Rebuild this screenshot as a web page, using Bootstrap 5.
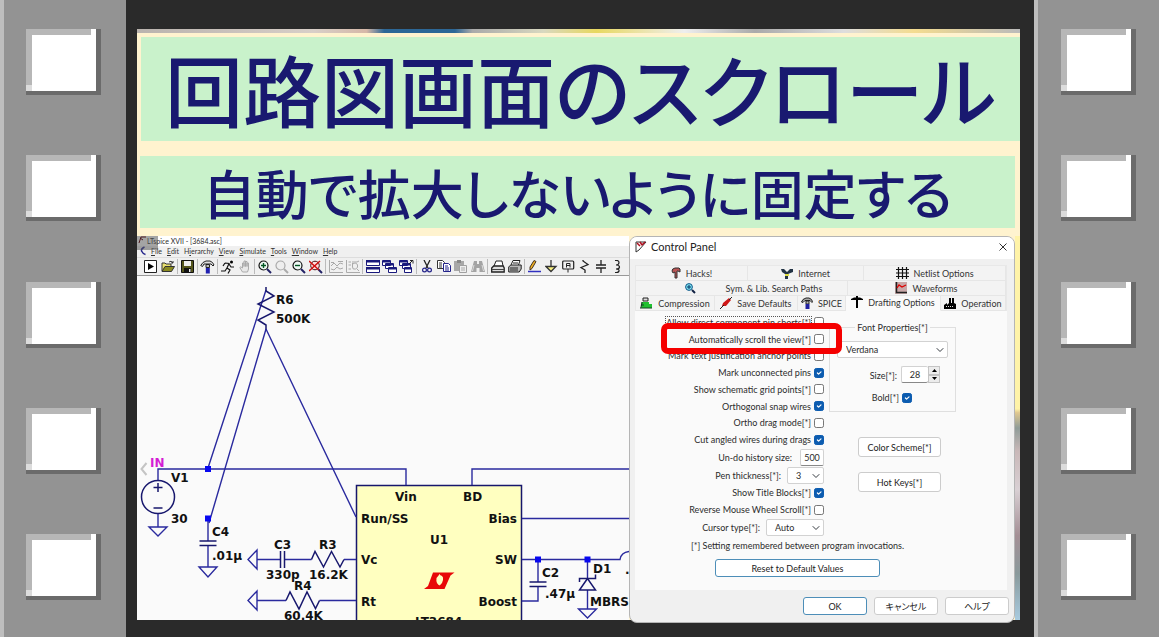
<!DOCTYPE html>
<html lang="ja">
<head>
<meta charset="utf-8">
<meta name="viewport" content="width=device-width, initial-scale=1">
<title>回路図画面のスクロール</title>
<link href="https://cdn.jsdelivr.net/npm/bootstrap@5.3.0/dist/css/bootstrap.min.css" rel="stylesheet">
<style>
body{background:#2a2a2a;font-family:Lato,"Noto Sans CJK JP",sans-serif;font-size:9px;line-height:11px;color:#2b2b2b}
/* film strip */
.rail{flex:0 0 126px;background:#939393;border-left:4px solid #bebebe;padding:29px 25px 37px 22px}
.rail-end{flex-basis:125px;padding:29px 23px 37px 23px}
.hole{width:75px;height:66px;border:solid #6b6b6b;border-width:0 5px 4px 0;background:linear-gradient(#b7b7b7,#b7b7b7) 0 0/65px 6px no-repeat,linear-gradient(#b7b7b7,#b7b7b7) 0 0/6px 56px no-repeat,linear-gradient(#dcdcdc,#dcdcdc) 0 100%/6px 6px no-repeat #fff}
.stage-wrap{padding:29px 14px 17px 11px;min-width:0}
.stage{background:linear-gradient(90deg,#b9b3ae,#d8cfc8 20%,#d6b8a8 26%,#2d6796 28%,#2d6796 36%,#aaa 38%,#d8d8c0 46%,#e8d860 52%,#eee 62%,#aaa 70%,#ddd 80%,#f4dc90 88%,#bbb) 0 0/100% 4px no-repeat #fff3cf}
.headline,.subline{background:#c9f2cb;color:#191970;font-family:"Noto Sans CJK JP",sans-serif;font-feature-settings:"palt";font-weight:500;white-space:nowrap}
.headline{font-size:78px;line-height:102px;padding-bottom:2px;margin:8px 0 15px 4px}
.subline{font-size:53px;line-height:72px;margin:0 5px 8px 3px}
/* schematic window */
.schem{min-width:0}
.spice-title{background:#fff;font-size:7px;line-height:10px;padding-left:10px}
.spice-menu{background:#f0f0f0;font-size:7px;line-height:11px;padding-left:3px;gap:5px}
.spice-menu a{color:#333;text-decoration:none}
.spice-tools{background:#f0f0f0;border-bottom:1px solid #999;border-top:1px solid #ddd;padding-left:5px;height:19px}
.tool{width:17px;height:17px;border:0;background:none;padding:0;display:flex;align-items:center;justify-content:center;flex:none}
.vline{width:3px;flex:none;background:linear-gradient(90deg,transparent 1px,#bbb 1px,#bbb 2px,transparent 2px);margin:1px 0}
.corner{left:0;top:0;width:21px;height:14px;background:rgba(90,90,90,.55)}
.sheet{background:#fafafa;min-height:0}
.sheet svg{font:bold 12px "DejaVu Sans",sans-serif}
/* dialog */
.photo{flex:0 0 5px;background:linear-gradient(#fff3a8 45%,#e0c890 46%,#8f9c98 50%,#c9b8b8 56%,#d9d0d4 66%,#a48f95 78%,#8a9a9c 88%,#a8cbe0)}
.panel{flex:0 0 386px;background:#f0f0f0;border:1px solid #b5b5b5;border-radius:8px;margin-bottom:-3px;overflow:hidden;z-index:2}
.panel-head{background:#fff;height:22px;padding:0 6px 3px 5px;font-size:11px;color:#222}
.tabs-area{margin:6px 7px 0 5px;border:1px solid #e8e8e8;border-bottom:0}
.tabrow{height:15px}
.tabbtn{border:0;border-right:1px solid #e6e6e6;border-bottom:1px solid #e6e6e6;background:#f3f3f3;padding:0;display:flex;align-items:center;justify-content:center;gap:5px;color:#333}
.tabbtn.now{background:#fafafa;border-bottom-color:#fafafa;padding-bottom:2px}
.page-area{background:#fafafa;margin:0 7px 0 5px;padding-top:3px;height:279px}
.form-body{width:325px}
.colmn-l{width:189px}
.ticks{height:134px;display:grid;grid-template-rows:repeat(8,1fr)}
.opt{display:flex;align-items:center;justify-content:flex-end;gap:3px;color:#2b2b2b;white-space:nowrap;position:relative}
.r19{height:19px}.r17{height:17px}
.form-check-input{width:10px;height:10px;margin:0;border:1px solid #777;border-radius:2px;flex:none}
.form-check-input:checked{background-color:#0c5cb0;border-color:#0c5cb0}
.opt.hot{z-index:3}
.opt.hot::before{content:"";position:absolute;inset:-8px -18px -6px 26px;border:6px solid #f50000;border-radius:7px;pointer-events:none}
.focus-dot{outline:1px dotted #555}
.form-select,.form-control{font-size:9px;line-height:11px;border:1px solid #d2d2d2;border-radius:2px;padding:0 4px;height:17px;min-height:0;color:#2b2b2b;background-color:#fff}
.form-select{background-size:8px;background-position:right 3px center;padding-left:8px;padding-right:10px}
.form-control{border-bottom-color:#888;text-align:center;padding:0}
.btn{font-size:9px;line-height:11px;padding:0;background:#fff;border:1px solid #ccc;border-radius:3px;color:#222;font-feature-settings:"palt"}
.btn.prime{border-color:#4d8eb8}
.colmn-r{width:127px;padding-top:8px}
.fontbox{border:1px solid #dfdfdf;height:90px;margin:0;padding:0 7px}
.fontbox legend{float:none;width:auto;font-size:9px;line-height:11px;margin:0 auto;padding:0 2px}
.size-row{padding:8px 8px 9px 0}
.spin{width:12px}
.spin button{border:1px solid #c4c4c4;background:#ececec;padding:0;flex:1;display:flex;align-items:center;justify-content:center}
.foot{gap:7px;padding:7px 5px 7px 0}
.foot .btn{width:64px;height:18px}
</style>
</head>
<body>
<div class="d-flex min-vh-100">
  <aside class="rail d-flex flex-column justify-content-between">
    <div class="hole"></div><div class="hole"></div><div class="hole"></div><div class="hole"></div><div class="hole"></div>
  </aside>
  <main class="stage-wrap flex-grow-1 d-flex flex-column">
    <div class="stage flex-grow-1 d-flex flex-column">
      <h1 class="headline text-center">回路図画面のスクロール</h1>
      <h2 class="subline text-center">自動で拡大しないように固定する</h2>
      <div class="d-flex flex-grow-1">
        <section class="schem flex-grow-1 d-flex flex-column position-relative overflow-hidden">
          <div class="spice-title">LTspice XVII - [3684.asc]</div>
          <nav class="spice-menu d-flex">
            <svg width="6" height="10" viewBox="0 0 6 10"><path d="M4.500 1Q1 2.500 1.500 5Q3 8 5.500 8.500" fill="none" stroke="#22228a" stroke-width="1.500"/></svg>
            <a href="#"><u>F</u>ile</a><a href="#"><u>E</u>dit</a><a href="#">H<u>i</u>erarchy</a><a href="#"><u>V</u>iew</a><a href="#"><u>S</u>imulate</a><a href="#"><u>T</u>ools</a><a href="#"><u>W</u>indow</a><a href="#"><u>H</u>elp</a>
          </nav>
          <div class="spice-tools d-flex">
            <button class="tool" aria-label="Run"><svg width="13" height="13" viewBox="0 0 13 13"><path d="M.5.5h12v12H.5z" fill="#fff" stroke="#222"/><path d="M4 3l6 3.500-6 3.500z" fill="#000"/></svg></button>
            <button class="tool" aria-label="Open"><svg width="14" height="13" viewBox="0 0 14 13"><path d="M1 11V3h3l1 1h5v2" fill="#e8e070" stroke="#333"/><path d="M1 11.500l3-5h9.500l-3 5z" fill="#8a8a20" stroke="#333"/><path d="M8 2q2-2 4 1M12 1v2h-2" fill="none" stroke="#333"/></svg></button>
            <span class="vline"></span>
            <button class="tool" aria-label="Save"><svg width="13" height="13" viewBox="0 0 13 13"><path d="M.5.5h12v12H.5z" fill="#55561d" stroke="#111"/><path d="M3 1h7v5H3z" fill="#eee"/><path d="M3 8h7v4H3z" fill="#111"/><path d="M8 9h1.500v3H8z" fill="#eee"/></svg></button>
            <span class="vline"></span>
            <button class="tool" aria-label="Control panel"><svg width="15" height="14" viewBox="0 0 15 14"><path d="M.7 5.500L3 2.500 6 1h4q3 1 4 4l-1 1-2-2H4L2.500 6.500z" fill="#ddd" stroke="#222"/><path d="M6 4.500h3.500v3H6z" fill="#bbb" stroke="#222"/><path d="M5.800 8h4v5.500h-4z" fill="#2020b0"/></svg></button>
            <span class="vline"></span>
            <button class="tool" aria-label="Halt"><svg width="14" height="14" viewBox="0 0 14 14"><circle cx="10.500" cy="2" r="1.500"/><path d="M4 3l4 .5L6 8l3 2-2 3.500M6 8l-2 3H0M8 4l2 3h3M4 3L2 6" fill="none" stroke="#111" stroke-width="1.200"/></svg></button>
            <button class="tool" aria-label="Pan"><svg width="12" height="13" viewBox="0 0 12 13"><path d="M3.500 12L.8 7.500l1-.7L3.500 8V3h1.500v3.500V1h1.500v5.500V1.500H8v5V3h1.500v6l-1 3z" fill="#e8e8e8" stroke="#aaa"/></svg></button>
            <span class="vline"></span>
            <button class="tool" aria-label="Zoom in"><svg width="14" height="14" viewBox="0 0 14 14"><circle cx="5.500" cy="5.500" r="4.500" fill="#eef8f4" stroke="#111" stroke-width="1.200"/><path d="M5.500 3v5M3 5.500h5" stroke="#052" stroke-width="1.400"/><path d="M9 9l4 4" stroke="#226" stroke-width="2"/></svg></button>
            <button class="tool" aria-label="Zoom area"><svg width="14" height="14" viewBox="0 0 14 14"><circle cx="5.500" cy="5.500" r="4.500" fill="#eee" stroke="#aaa" stroke-width="1.200"/><path d="M9 9l4 4" stroke="#aaa" stroke-width="2"/></svg></button>
            <button class="tool" aria-label="Zoom out"><svg width="14" height="14" viewBox="0 0 14 14"><circle cx="5.500" cy="5.500" r="4.500" fill="#eef8f4" stroke="#111" stroke-width="1.200"/><path d="M3 5.500h5" stroke="#052" stroke-width="1.400"/><path d="M9 9l4 4" stroke="#226" stroke-width="2"/></svg></button>
            <button class="tool" aria-label="Zoom fit"><svg width="14" height="14" viewBox="0 0 14 14"><circle cx="6" cy="5.500" r="4.300" fill="#fdd" stroke="#411" stroke-width="1"/><path d="M9 9l4 4" stroke="#226" stroke-width="2"/><path d="M0 1l10 9M11 1L0 11" stroke="#d01010" stroke-width="1.500"/></svg></button>
            <span class="vline"></span>
            <button class="tool" aria-label="Autorange"><svg width="14" height="13" viewBox="0 0 14 13" fill="none" stroke="#aaa"><path d="M.5 0v12.500H14M2 6l3-3 3 3 3-3 3 1M2 9l3 1 3-3 3 2 3-1M2 2.500h3M9 1.500h5"/></svg></button>
            <button class="tool" aria-label="Trace"><svg width="14" height="13" viewBox="0 0 14 13" fill="none" stroke="#aaa"><path d="M.5 0v12.500H14M2.500 2H5M2.500 5H5M2.500 9H5"/><path d="M6 2h5l2-1M6.500 4q4-2 5 1t-2 4-3-2V3M11 9l2 2"/></svg></button>
            <span class="vline"></span>
            <button class="tool" aria-label="Tile"><svg width="14" height="13" viewBox="0 0 14 13"><path d="M.5.5h13v5H.5zM.5 7.500h13v5H.5z" fill="#fff" stroke="#18187c"/><path d="M0 0h14v2.500H0zM0 7h14v2.500H0z" fill="#18187c"/></svg></button>
            <button class="tool" aria-label="Cascade"><svg width="15" height="13" viewBox="0 0 15 13"><g fill="#fff" stroke="#18187c"><path d="M.5.5h8v5h-8zM3.500 3.500h8v5h-8zM6.500 7.500h8v5h-8z"/><path d="M1 1.500h7M4 4.500h7M7 8.500h7" stroke-width="2"/></g></svg></button>
            <button class="tool" aria-label="Close all"><svg width="15" height="13" viewBox="0 0 15 13"><g fill="#fff" stroke="#18187c"><path d="M.5.5h8v5h-8zM3.500 3.500h8v5h-8zM5.500 7.500h7v5h-7z"/><path d="M1 1.500h7M4 4.500h7M6 8.500h6" stroke-width="2"/><path d="M10 4l4-4M11 .5h3v3" stroke="#222"/></g></svg></button>
            <span class="vline"></span>
            <button class="tool" aria-label="Cut"><svg width="10" height="13" viewBox="0 0 10 13" fill="none"><path d="M2 0l4 8M8 0L4 8" stroke="#222" stroke-width="1.300"/><circle cx="2.500" cy="10" r="1.900" stroke="#22228a" stroke-width="1.200"/><circle cx="7.500" cy="10" r="1.900" stroke="#22228a" stroke-width="1.200"/></svg></button>
            <button class="tool" aria-label="Copy"><svg width="14" height="13" viewBox="0 0 14 13" fill="#fff"><path d="M.5.5h5l2 2v6h-7z" stroke="#333"/><path d="M2 3h3M2 5h3M2 7h3" stroke="#333"/><path d="M6.500 3.500h5l2 2v6h-7z" stroke="#22228a"/><path d="M8 6h3M8 8h4M8 10h4" stroke="#22228a"/></svg></button>
            <button class="tool" aria-label="Paste"><svg width="13" height="13" viewBox="0 0 13 13"><path d="M0 1h10v10H0z" fill="#a8a8a8"/><path d="M3 0h4v3H3z" fill="#888"/><path d="M5.500 5.500h7v7h-7z" fill="#eee" stroke="#a0a0a0"/><path d="M7 8h4M7 10h4" stroke="#aaa"/></svg></button>
            <button class="tool" aria-label="Find"><svg width="14" height="13" viewBox="0 0 14 13"><path d="M3 1h3v3h2V1h3l3 11H8.500V8h-3v4H0z" fill="#a4a4a4"/><path d="M3 5L1.500 11M11 5l1.500 6" stroke="#ddd"/></svg></button>
            <span class="vline"></span>
            <button class="tool" aria-label="Print preview"><svg width="14" height="13" viewBox="0 0 14 13"><path d="M3 6l2-5h6l1 5" fill="#fff" stroke="#222"/><path d="M.7 8l2-2h9.500l1 2v4H.7z" fill="#ddd" stroke="#222" stroke-width="1.300"/><path d="M1 9.500h12" stroke="#444"/></svg></button>
            <button class="tool" aria-label="Print"><svg width="14" height="13" viewBox="0 0 14 13"><path d="M3 5l2-4.500h7L10.500 5" fill="#fff" stroke="#222"/><path d="M.7 7l2-2h10.500v4l-2 3H.7z" fill="#bbb" stroke="#222"/><path d="M2 8h8M2 10h8M5 3h5" stroke="#222"/></svg></button>
            <span class="vline"></span>
            <button class="tool" aria-label="Wire"><svg width="14" height="13" viewBox="0 0 14 13"><path d="M2 7l4-6.500 2 1L4 8.500 2 10z" fill="#f0b020" stroke="#432"/><path d="M0 11.500h13" stroke="#3030c0" stroke-width="1.500"/></svg></button>
            <button class="tool" aria-label="Ground"><svg width="14" height="13" viewBox="0 0 14 13"><path d="M6 0v6M1 6.500h10L6 11.500z" fill="#f8f080" stroke="#333" stroke-width="1.300"/></svg></button>
            <button class="tool" aria-label="Label net"><svg width="14" height="13" viewBox="0 0 14 13" fill="none" stroke="#222"><rect x=".7" y="1" width="11" height="8" rx="1" stroke-width="1.200"/><path d="M4.500 7.500V3.500H8v4M4.500 5.500H8M6 9v3.500"/></svg></button>
            <button class="tool" aria-label="Resistor"><svg width="14" height="13" viewBox="0 0 14 13" fill="none" stroke="#222" stroke-width="1.300"><path d="M4 0v1l5 3.500-7 3L6 10v3"/></svg></button>
            <button class="tool" aria-label="Capacitor"><svg width="14" height="13" viewBox="0 0 14 13" stroke="#222" stroke-width="1.300"><path d="M5 0v5M0 5h10M0 8h10M5 8v5"/></svg></button>
            <button class="tool" aria-label="Inductor"><svg width="14" height="13" viewBox="0 0 14 13" fill="none" stroke="#222" stroke-width="1.200"><path d="M2 .5q4-.5 4 2T3 5q3.500 0 3.500 2T3 9q3.500 0 3 2T2 12.500"/></svg></button>
          </div>
          <div class="corner position-absolute"><svg class="d-block" width="10" height="8" viewBox="0 0 10 8"><path d="M2 7l2-6h5M3 2l3 2" stroke="#501c20" fill="none"/></svg></div>
          <div class="sheet flex-grow-1 position-relative">
            <svg class="position-absolute w-100 h-100" viewBox="137 276 492 344" preserveAspectRatio="xMinYMin slice" fill="#111">
              <rect x="356.500" y="485.500" width="165" height="160" fill="#ffffc0" stroke="#16166c" stroke-width="1.500"/>
              <g fill="none" stroke="#2a2a9e" stroke-width="1.400">
                <path d="M266 290L208 468M266 329L209 523M266 329L356 517"/>
                <path d="M158 480v-11h248v16M472 485v-16h160M522 518.500h110M522 559.500h98q1-7 9-8M538 559v23M538 586v15h-16M587.500 559v19M587.500 590v19"/>
                <path d="M158 514v13M208 521v20M208 545v22M257 559.500h23M285 559.500h26.500M344 559.500h12M257 600.500h29M319.500 600.500H356"/>
                <path d="M149 527h18l-9 9zM199 567h18l-9 10zM257 550v19l-9-9.500zM257 591v19l-9-9.500zM578.500 609h18l-9 9z"/>
              </g>
              <g fill="none" stroke="#18186e" stroke-width="1.500">
                <path d="M266 287v4l8 5-16 8 16 8-16 8 8 5v4"/>
                <circle cx="158" cy="497" r="16.500"/>
                <path d="M153.500 487.500h9M158 483v9M153.500 508h9M199.500 541h17M199.500 545.500h17M280.500 551v17M284.500 551v17"/>
                <path d="M311.500 559.500l3.500-8 8.500 15.500 8-15.500 8.500 15.500 4-7.500M286 600.500l4-8.500 9 17 8-17 8.500 16.500 4-8"/>
                <path d="M529.500 582h17M529.500 586.500h17M579.500 582v-3.500h16v-4M587.500 578.500l-8 11.500h16z"/>
              </g>
              <path d="M205 466h6v6h-6zM205 515.500h6v6h-6zM535 556.500h6v6h-6zM584.500 556.500h6v6h-6z" fill="#0808f0"/>
              <path d="M433 572.500h8l-4.500 5.500q-1 6 4 8l-2.500 3h-14l4-3zM440 572.500h14.500l-4 3-6 13.500h-8l5.500-6q3-7-2-8z" fill="#e80808"/>
              <path d="M146.500 463l-5 6 5 6" fill="none" stroke="#c4c4c4" stroke-width="2"/>
              <text x="150" y="467" fill="#d41cd4">IN</text>
              <text x="171" y="482">V1</text><text x="171" y="523">30</text>
              <text x="276" y="304">R6</text><text x="276" y="323">500K</text>
              <text x="212" y="536">C4</text><text x="212" y="560">.01µ</text>
              <text x="274" y="549">C3</text><text x="319" y="549">R3</text>
              <text x="266" y="579">330p</text><text x="309" y="579">16.2K</text>
              <text x="294" y="590">R4</text><text x="284" y="620">60.4K</text>
              <text x="395" y="501">Vin</text><text x="463" y="501">BD</text>
              <text x="361" y="523">Run/SS</text><text x="517" y="523" text-anchor="end">Bias</text>
              <text x="430" y="544">U1</text><text x="361" y="564">Vc</text>
              <text x="517" y="564" text-anchor="end">SW</text><text x="361" y="606">Rt</text>
              <text x="517" y="606" text-anchor="end">Boost</text><text x="415" y="626">LT3684</text>
              <text x="542" y="577">C2</text><text x="545" y="598">.47µ</text>
              <text x="593" y="573">D1</text><text x="590" y="606">MBRS</text><text x="625" y="574">.</text>
            </svg>
          </div>
        </section>
        <section class="panel" aria-label="Control Panel">
          <div class="panel-head d-flex align-items-center">
            <svg width="12" height="12" viewBox="0 0 12 12"><path d="M1 11V1h10L4 9z" fill="#fff" stroke="#333"/><path d="M2 2l3 3M5 1l2 3M7 4l3-3" stroke="#b01020" stroke-width="1.500"/></svg>
            <span class="ms-1">Control Panel</span>
            <button class="border-0 bg-transparent p-0 ms-auto d-flex" aria-label="Close"><svg width="10" height="10" viewBox="0 0 10 10"><path d="M1.500 1.500l7 7M8.500 1.500l-7 7" stroke="#333"/></svg></button>
          </div>
          <div class="tabs-area">
            <div class="tabrow d-flex">
              <button class="tabbtn" style="flex:112"><svg width="10" height="12" viewBox="0 0 10 12"><path d="M1 4q0-2.500 3-3h4l1 1v3L7 4H6v7H4V5L2 6z" fill="#b55" stroke="#333"/></svg>Hacks!</button>
              <button class="tabbtn" style="flex:116"><svg width="12" height="11" viewBox="0 0 12 11"><path d="M0 1h3l3 3 3-3h3v3L7 6v5H4V6L1 4z" fill="#234"/><path d="M4 6h4v2H4z" fill="#dd4"/></svg>Internet</button>
              <button class="tabbtn" style="flex:142"><svg width="13" height="12" viewBox="0 0 13 12"><path d="M2.500 0v12M6.500 0v12M10.500 0v12M0 2.500h13M0 6h13M0 9.500h13" stroke="#111" stroke-width="1.200"/></svg>Netlist Options</button>
            </div>
            <div class="tabrow d-flex">
              <button class="tabbtn ps-4" style="flex:188;gap:30px"><svg width="11" height="11" viewBox="0 0 11 11"><circle cx="4" cy="4" r="3.400" fill="#7fe4f0" stroke="#158"/><path d="M4 2v4M2 4h4" stroke="#036"/><path d="M7 7l3 3" stroke="#124" stroke-width="2"/></svg>Sym. &amp; Lib. Search Paths</button>
              <button class="tabbtn" style="flex:158"><svg width="12" height="12" viewBox="0 0 12 12"><path d="M0 0h12v12H0z" fill="#c9a8a8"/><path d="M1.500 0v10.500H12" fill="none" stroke="#222" stroke-width="1.500"/><path d="M2 6l2-3 3 2 4-2" fill="none" stroke="#d00" stroke-width="1.300"/></svg>Waveforms</button>
            </div>
            <div class="tabrow d-flex">
              <button class="tabbtn" style="flex:79"><svg width="13" height="12" viewBox="0 0 13 12"><path d="M3 1h5v3H3z" fill="#ddd" stroke="#222"/><path d="M2 5h7v2h3v4H2z" fill="#1fc030"/><path d="M1 8h3M0 11h12M2 5l-1 6" stroke="#142" stroke-width="1.200"/></svg>Compression</button>
              <button class="tabbtn" style="flex:83"><svg width="12" height="12" viewBox="0 0 12 12"><path d="M2 9l1-3 6-5 2 2-5 6z" fill="#d01818"/><path d="M0 12l4-4M9 3l3-3" stroke="#222"/></svg>Save Defaults</button>
              <button class="tabbtn" style="flex:48"><svg width="12" height="12" viewBox="0 0 12 12"><path d="M.5 5L2 2.500 5 1h3q3 1 3.500 3.500L11 5.500 9 3.500H4L2 5.500z" fill="#aaa" stroke="#222"/><path d="M5 4h3v3H5z" fill="#bbb" stroke="#222"/><path d="M4.500 7h4v5h-4z" fill="#2020a0"/></svg>SPICE</button>
              <button class="tabbtn now" style="flex:95"><svg width="12" height="12" viewBox="0 0 12 12"><path d="M0 3l3-1.500h6L12 3v1H0z"/><path d="M5 0h2v12H5z"/></svg>Drafting Options</button>
              <button class="tabbtn" style="flex:65"><svg width="12" height="12" viewBox="0 0 12 12"><path d="M0 12V8l3-2v2l2-2V1h2v5h1V1h2v5l2 1v5z"/><path d="M2 9.500h8" stroke="#ddd" stroke-dasharray="1 1"/></svg>Operation</button>
            </div>
          </div>
          <div class="page-area">
            <form class="form-body">
              <div class="d-flex justify-content-between pe-1">
                <div class="colmn-l">
                  <div class="ticks">
                    <label class="opt"><span class="focus-dot">Allow direct component pin shorts[*]</span><input class="form-check-input" type="checkbox"></label>
                    <label class="opt hot">Automatically scroll the view[*]<input class="form-check-input" type="checkbox"></label>
                    <label class="opt">Mark text justification anchor points<input class="form-check-input" type="checkbox"></label>
                    <label class="opt">Mark unconnected pins<input class="form-check-input" type="checkbox" checked></label>
                    <label class="opt">Show schematic grid points[*]<input class="form-check-input" type="checkbox"></label>
                    <label class="opt">Orthogonal snap wires<input class="form-check-input" type="checkbox" checked></label>
                    <label class="opt">Ortho drag mode[*]<input class="form-check-input" type="checkbox"></label>
                    <label class="opt">Cut angled wires during drags<input class="form-check-input" type="checkbox" checked></label>
                  </div>
                  <label class="opt r19" style="gap:8px">Un-do history size:<input class="form-control" style="width:24px" value="500"></label>
                  <label class="opt r17" style="gap:6px">Pen thickness[*]:<select class="form-select" style="width:37px"><option>3</option></select></label>
                  <label class="opt r17">Show Title Blocks[*]<input class="form-check-input" type="checkbox" checked></label>
                  <label class="opt r17">Reverse Mouse Wheel Scroll[*]<input class="form-check-input" type="checkbox"></label>
                  <label class="opt r19" style="gap:6px">Cursor type[*]:<select class="form-select" style="width:58px"><option>Auto</option></select></label>
                </div>
                <div class="colmn-r">
                  <fieldset class="fontbox">
                    <legend>Font Properties[*]</legend>
                    <select class="form-select mt-2 w-100" aria-label="Font"><option>Verdana</option></select>
                    <div class="size-row d-flex justify-content-end"><label for="fsize" class="me-1 pt-1">Size[*]:</label><input id="fsize" class="form-control border-end-0" style="width:27px" value="28"><span class="spin d-flex flex-column"><button type="button" aria-label="Up"><svg width="5" height="3"><path d="M0 3l2.500-3L5 3z"/></svg></button><button type="button" aria-label="Down"><svg width="5" height="3"><path d="M0 0h5L2.500 3z"/></svg></button></span></div>
                    <label class="opt" style="padding-right:36px">Bold[*]<input class="form-check-input" type="checkbox" checked></label>
                  </fieldset>
                  <div class="d-flex flex-column" style="margin:25px 15px 0 29px;gap:15px">
                    <button type="button" class="btn" style="height:20px">Color Scheme[*]</button>
                    <button type="button" class="btn" style="height:20px">Hot Keys[*]</button>
                  </div>
                </div>
              </div>
              <div class="text-center" style="padding:3px 0 8px">[*] Setting remembered between program invocations.</div>
              <button type="button" class="btn prime d-block mx-auto" style="width:165px;height:18px">Reset to Default Values</button>
            </form>
          </div>
          <div class="foot d-flex justify-content-end">
            <button class="btn prime">OK</button><button class="btn">キャンセル</button><button class="btn">ヘルプ</button>
          </div>
        </section>
        <div class="photo"></div>
      </div>
    </div>
  </main>
  <aside class="rail rail-end d-flex flex-column justify-content-between">
    <div class="hole"></div><div class="hole"></div><div class="hole"></div><div class="hole"></div><div class="hole"></div>
  </aside>
</div>
<script src="https://cdn.jsdelivr.net/npm/bootstrap@5.3.0/dist/js/bootstrap.bundle.min.js"></script>
</body>
</html>
